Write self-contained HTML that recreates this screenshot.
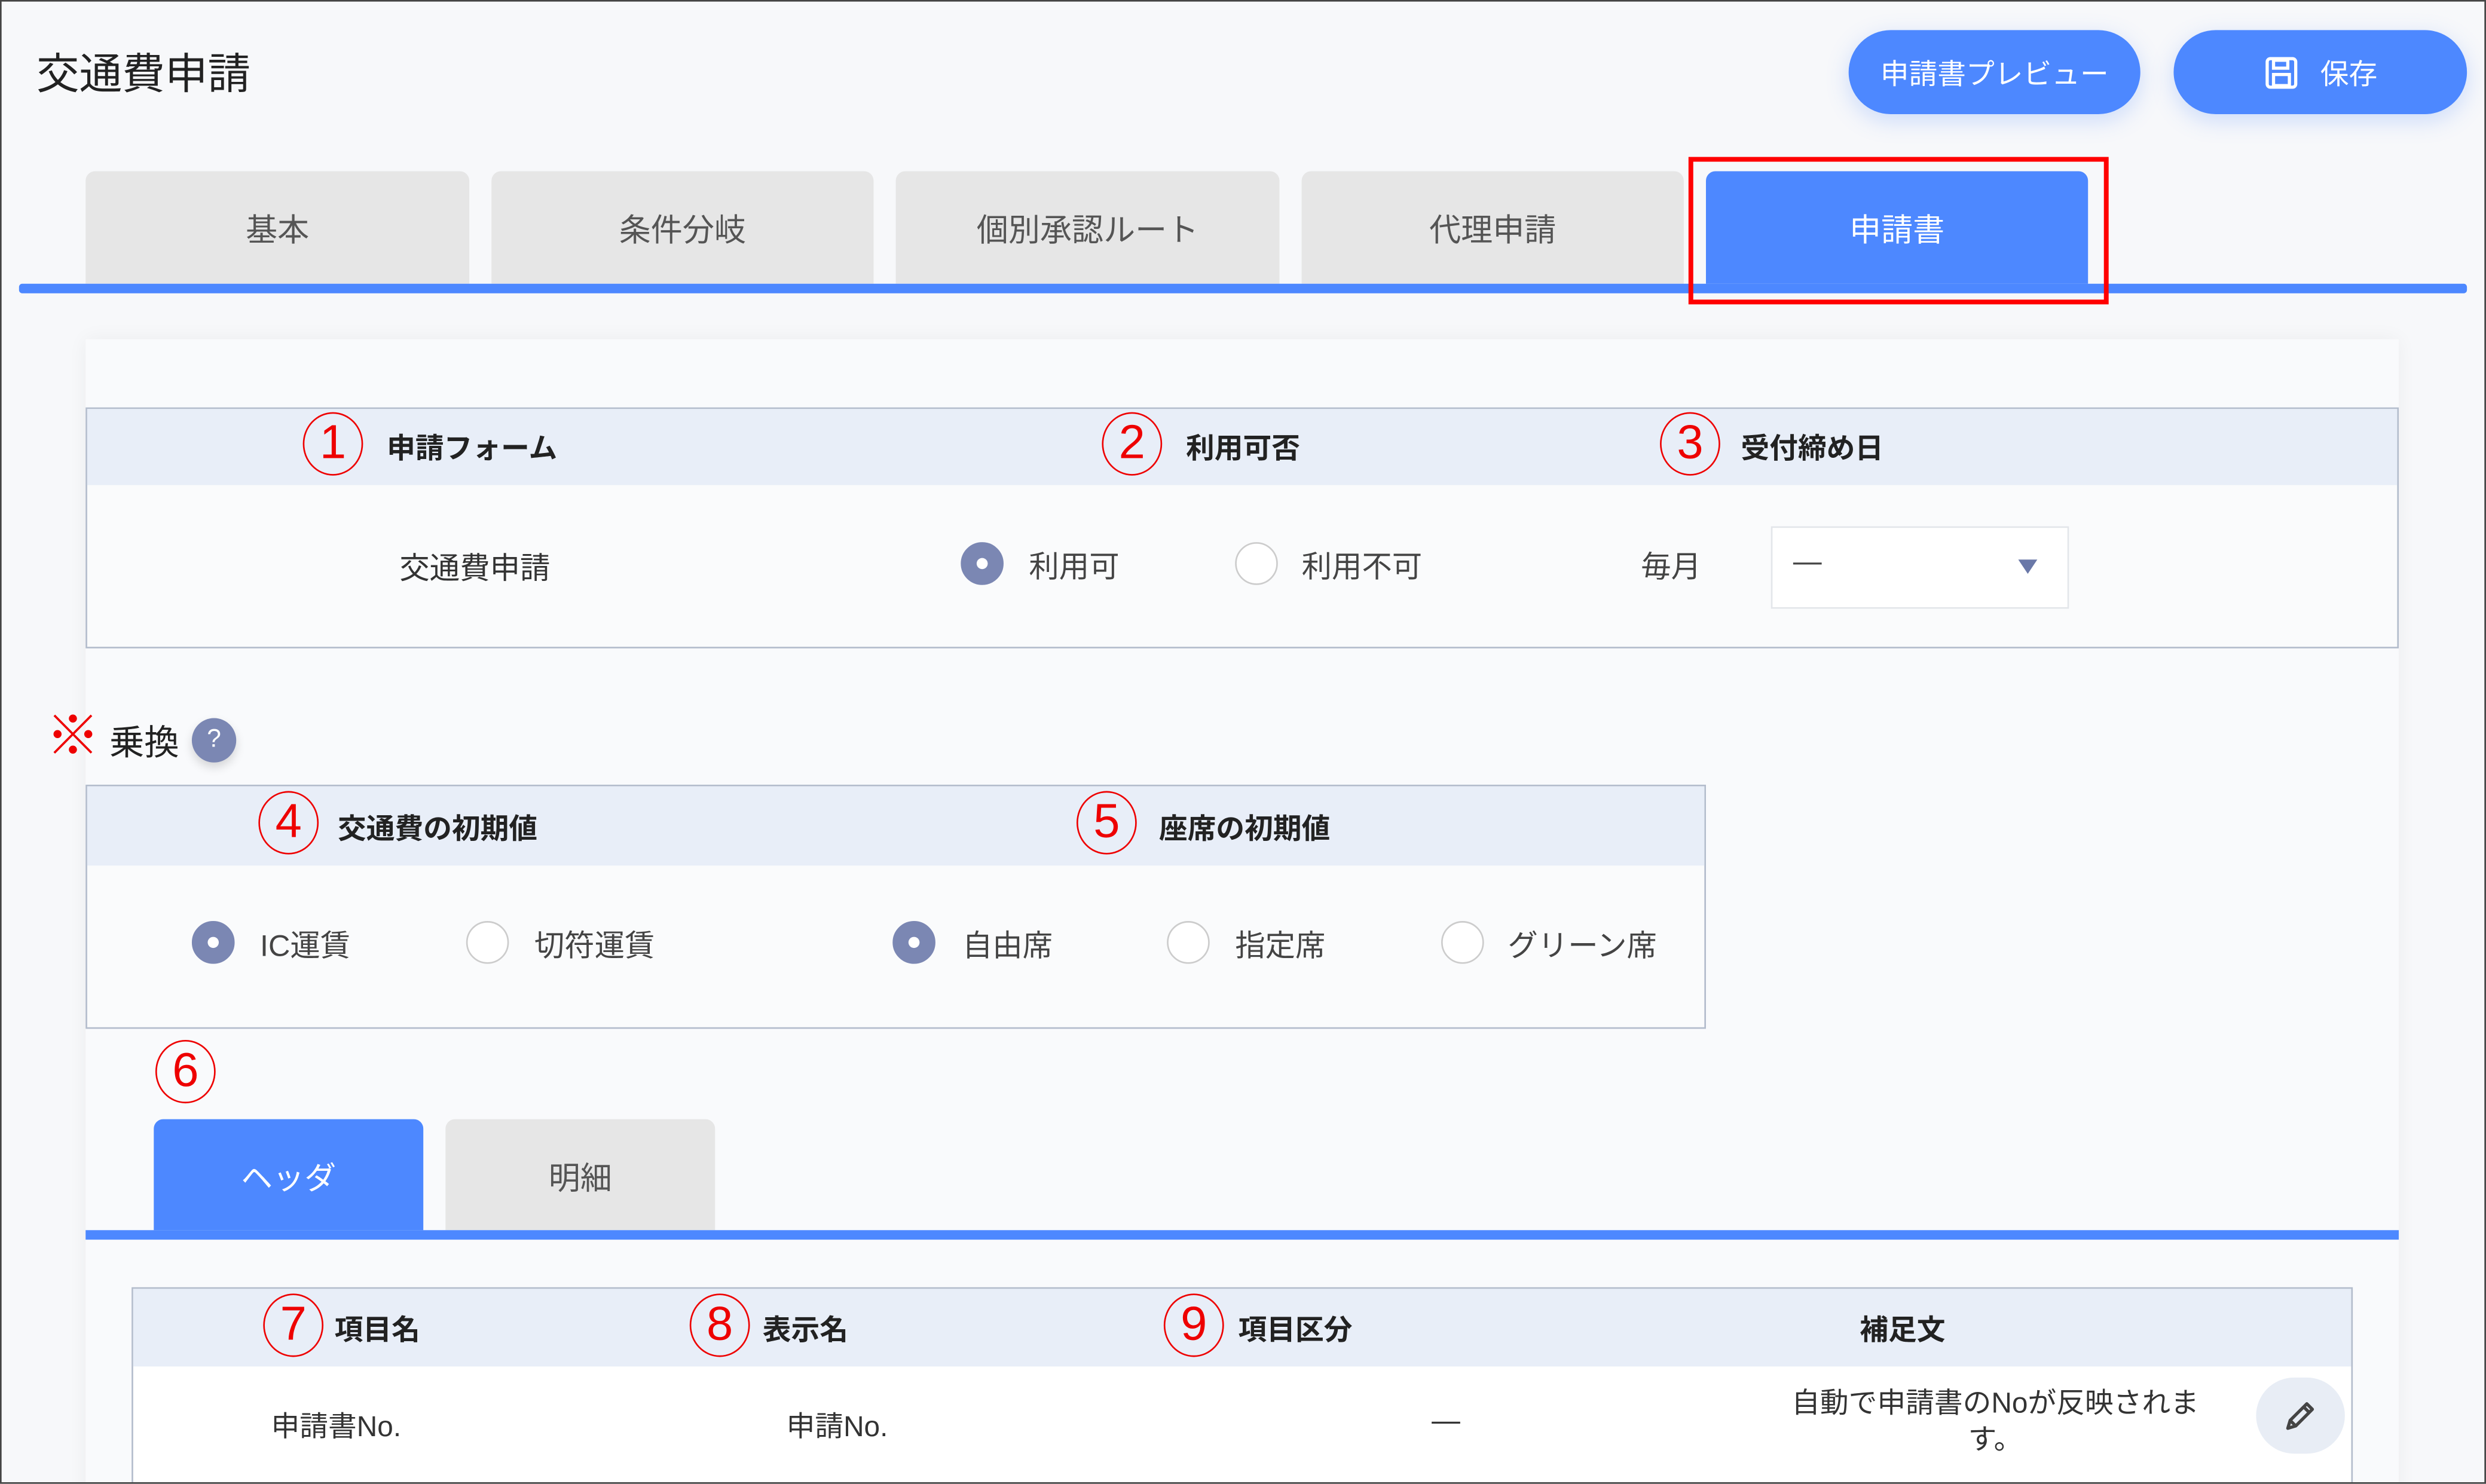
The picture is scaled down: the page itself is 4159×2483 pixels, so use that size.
<!DOCTYPE html>
<html><head><meta charset="utf-8"><style>
*{margin:0;padding:0;box-sizing:border-box}
html,body{width:4159px;height:2483px;overflow:hidden;background:#f7f8fa}
#w{position:absolute;left:0;top:0;width:1568px;height:936px;transform:scale(2.6524);transform-origin:0 0;font-family:"Liberation Sans","Noto Sans CJK JP",sans-serif;color:#333;border:1.5px solid #444;background:#f7f8fa;overflow:hidden}
.a{position:absolute;white-space:nowrap}
.btn{position:absolute;top:18px;height:53px;border-radius:27px;background:#4d88ff;color:#fff;font-size:18px;display:flex;align-items:center;justify-content:center;box-shadow:0 4px 14px rgba(77,136,255,.25)}
.tab{position:absolute;top:107px;height:71px;border-radius:6px 6px 0 0;background:#e6e6e6;color:#555;font-size:20px;display:flex;align-items:center;justify-content:center}
.on{background:#4d88ff;color:#fff}
.tbl{position:absolute;border:1px solid #b3bccc;background:#fafbfc}
.hd{position:absolute;left:0;right:0;top:0;background:#e8eef8}
.b{font-weight:bold;font-size:18px;color:#222}
.c{position:absolute;width:38px;height:40px;border:1.5px solid #e00;border-radius:50%;color:#e00;font-size:30px;line-height:38px;text-align:center}
.r{position:absolute;width:27px;height:27px;border-radius:50%;border:1px solid #ccc;background:#fff}
.r.k{background:#7b87b3;border-color:#7b87b3}
.r.k:after{content:"";position:absolute;left:9px;top:9px;width:7px;height:7px;border-radius:50%;background:#fff}
.t{font-size:19px;color:#444}
</style></head><body><div id="w">
<div class="a" style="left:22px;top:24px;font-size:27px;color:#222">交通費申請</div>
<div class="btn" style="left:1165px;width:184px">申請書プレビュー</div>
<div class="btn" style="left:1370px;width:185px"><svg width="22" height="22" viewBox="0 0 22 22" style="margin-right:14px"><rect x="2" y="2" width="18" height="18" rx="2" fill="none" stroke="#fff" stroke-width="2"/><rect x="6" y="3" width="9" height="5" fill="none" stroke="#fff" stroke-width="2"/><rect x="6" y="12" width="10" height="7" fill="none" stroke="#fff" stroke-width="2"/></svg>保存</div>

<div class="tab" style="left:53px;width:242px">基本</div>
<div class="tab" style="left:309px;width:241px">条件分岐</div>
<div class="tab" style="left:564px;width:242px">個別承認ルート</div>
<div class="tab" style="left:820px;width:241px">代理申請</div>
<div class="tab on" style="left:1075px;width:241px">申請書</div>
<div class="a" style="left:11px;top:178px;width:1544px;height:6px;background:#4d88ff;border-radius:2px"></div>
<div class="a" style="left:1064px;top:98px;width:265px;height:93px;border:3px solid #f00"></div>

<div class="a" style="left:53px;top:213px;width:1459px;height:740px;background:#f9fafc;box-shadow:0 0 12px rgba(0,0,0,.05)"></div>

<div class="tbl" style="left:53px;top:256px;width:1459px;height:152px">
<div class="hd" style="height:48px"></div></div>
<div class="c" style="left:190px;top:259px">1</div><div class="a b" style="left:243px;top:268px">申請フォーム</div>
<div class="c" style="left:694px;top:259px">2</div><div class="a b" style="left:747px;top:268px">利用可否</div>
<div class="c" style="left:1046px;top:259px">3</div><div class="a b" style="left:1097px;top:268px">受付締め日</div>
<div class="a t" style="left:251px;top:343px;color:#333">交通費申請</div>
<div class="r k" style="left:605px;top:341px"></div><div class="a t" style="left:648px;top:342px">利用可</div>
<div class="r" style="left:778px;top:341px"></div><div class="a t" style="left:820px;top:342px">利用不可</div>
<div class="a t" style="left:1034px;top:342px">毎月</div>
<div class="a" style="left:1116px;top:331px;width:188px;height:52px;background:#fff;border:1px solid #e3e6ea"></div>
<div class="a" style="left:1130px;top:343px;font-size:18px;color:#444">—</div>
<div class="a" style="left:1272px;top:352px;width:0;height:0;border-left:6px solid transparent;border-right:6px solid transparent;border-top:9px solid #6a78a8"></div>

<div class="a" style="left:28px;top:444px;font-size:34px;color:#e00;line-height:40px">※</div>
<div class="a" style="left:68px;top:450px;font-size:22px;color:#222">乗換</div>
<div class="a" style="left:120px;top:452px;width:28px;height:28px;border-radius:50%;background:#7b87b3;color:#fff;font-size:16px;text-align:center;line-height:28px;box-shadow:0 3px 6px rgba(0,0,0,.15)">?</div>

<div class="tbl" style="left:53px;top:494px;width:1022px;height:154px">
<div class="hd" style="height:50px"></div></div>
<div class="c" style="left:162px;top:498px">4</div><div class="a b" style="left:212px;top:508px">交通費の初期値</div>
<div class="c" style="left:678px;top:498px">5</div><div class="a b" style="left:730px;top:508px">座席の初期値</div>
<div class="r k" style="left:120px;top:580px"></div><div class="a t" style="left:163px;top:581px">IC運賃</div>
<div class="r" style="left:293px;top:580px"></div><div class="a t" style="left:336px;top:581px">切符運賃</div>
<div class="r k" style="left:562px;top:580px"></div><div class="a t" style="left:606px;top:581px">自由席</div>
<div class="r" style="left:735px;top:580px"></div><div class="a t" style="left:778px;top:581px">指定席</div>
<div class="r" style="left:908px;top:580px"></div><div class="a t" style="left:950px;top:581px">グリーン席</div>

<div class="c" style="left:97px;top:655px">6</div>
<div class="tab on" style="left:96px;top:705px;width:170px;height:70px">ヘッダ</div>
<div class="tab" style="left:280px;top:705px;width:170px;height:70px">明細</div>
<div class="a" style="left:53px;top:775px;width:1459px;height:6px;background:#4d88ff"></div>

<div class="tbl" style="left:82px;top:811px;width:1401px;height:140px;background:#fff">
<div class="hd" style="height:49px"></div></div>
<div class="c" style="left:165px;top:815px">7</div><div class="a b" style="left:210px;top:824px">項目名</div>
<div class="c" style="left:434px;top:815px">8</div><div class="a b" style="left:480px;top:824px">表示名</div>
<div class="c" style="left:733px;top:815px">9</div><div class="a b" style="left:780px;top:824px">項目区分</div>
<div class="a b" style="left:1172px;top:824px">補足文</div>
<div class="a" style="left:170px;top:885px;font-size:18px;color:#333">申請書No.</div>
<div class="a" style="left:495px;top:885px;font-size:18px;color:#333">申請No.</div>
<div class="a" style="left:902px;top:885px;font-size:18px;color:#333">—</div>
<div class="a" style="left:1120px;top:873px;width:275px;font-size:18px;color:#333;text-align:center;white-space:normal;line-height:23px">自動で申請書のNoが反映されます。</div>
<div class="a" style="left:1422px;top:868px;width:56px;height:48px;border-radius:24px;background:#e8edf5;display:flex;align-items:center;justify-content:center"><svg width="24" height="24" viewBox="0 0 24 24"><path d="M4 20l1.5-5L16 4.5l3.5 3.5L9 18.5z M14 6.5l3.5 3.5 M5.5 15l3.5 3.5" fill="none" stroke="#444" stroke-width="2" stroke-linejoin="round"/></svg></div>
</div></body></html>
